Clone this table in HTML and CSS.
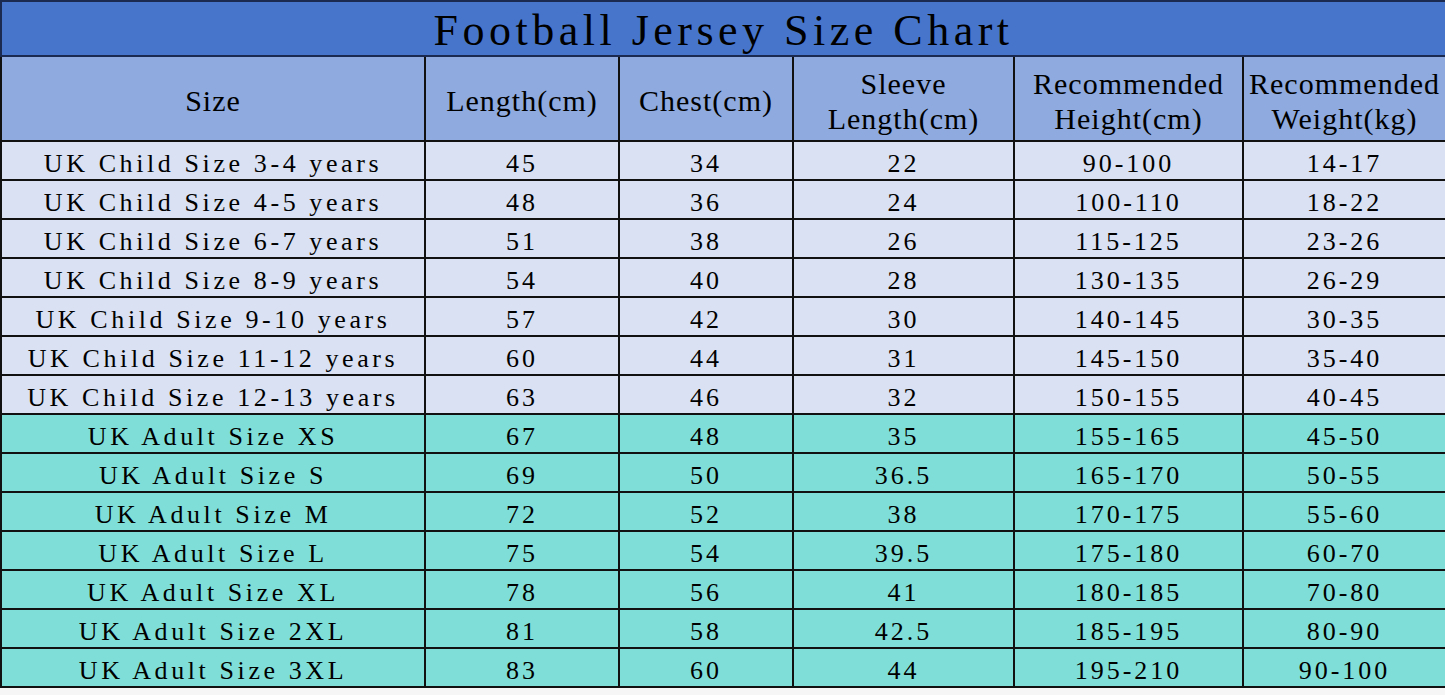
FILE: index.html
```html
<!DOCTYPE html>
<html>
<head>
<meta charset="utf-8">
<link rel="stylesheet" href="styles.css">
</head>
<body>
<table class="chart">
  <colgroup>
    <col class="c1"><col class="c2"><col class="c3"><col class="c4"><col class="c5"><col class="c6">
  </colgroup>
  <tr class="title"><td colspan="6">Football Jersey Size Chart</td></tr>
  <tr class="head">
    <td>Size</td>
    <td>Length(cm)</td>
    <td>Chest(cm)</td>
    <td>Sleeve<br>Length(cm)</td>
    <td>Recommended<br>Height(cm)</td>
    <td>Recommended<br>Weight(kg)</td>
  </tr>
  <tr class="child"><td class="name">UK Child Size 3-4 years</td><td>45</td><td>34</td><td>22</td><td>90-100</td><td>14-17</td></tr>
  <tr class="child"><td class="name">UK Child Size 4-5 years</td><td>48</td><td>36</td><td>24</td><td>100-110</td><td>18-22</td></tr>
  <tr class="child"><td class="name">UK Child Size 6-7 years</td><td>51</td><td>38</td><td>26</td><td>115-125</td><td>23-26</td></tr>
  <tr class="child"><td class="name">UK Child Size 8-9 years</td><td>54</td><td>40</td><td>28</td><td>130-135</td><td>26-29</td></tr>
  <tr class="child"><td class="name">UK Child Size 9-10 years</td><td>57</td><td>42</td><td>30</td><td>140-145</td><td>30-35</td></tr>
  <tr class="child"><td class="name">UK Child Size 11-12 years</td><td>60</td><td>44</td><td>31</td><td>145-150</td><td>35-40</td></tr>
  <tr class="child"><td class="name">UK Child Size 12-13 years</td><td>63</td><td>46</td><td>32</td><td>150-155</td><td>40-45</td></tr>
  <tr class="adult"><td class="name">UK Adult Size XS</td><td>67</td><td>48</td><td>35</td><td>155-165</td><td>45-50</td></tr>
  <tr class="adult"><td class="name">UK Adult Size S</td><td>69</td><td>50</td><td>36.5</td><td>165-170</td><td>50-55</td></tr>
  <tr class="adult"><td class="name">UK Adult Size M</td><td>72</td><td>52</td><td>38</td><td>170-175</td><td>55-60</td></tr>
  <tr class="adult"><td class="name">UK Adult Size L</td><td>75</td><td>54</td><td>39.5</td><td>175-180</td><td>60-70</td></tr>
  <tr class="adult"><td class="name">UK Adult Size XL</td><td>78</td><td>56</td><td>41</td><td>180-185</td><td>70-80</td></tr>
  <tr class="adult"><td class="name">UK Adult Size 2XL</td><td>81</td><td>58</td><td>42.5</td><td>185-195</td><td>80-90</td></tr>
  <tr class="adult"><td class="name">UK Adult Size 3XL</td><td>83</td><td>60</td><td>44</td><td>195-210</td><td>90-100</td></tr>
</table>
</body>
</html>
```

FILE: styles.css
```css
html, body {
  margin: 0;
  padding: 0;
  background: #f6f6f6;
}
body {
  font-family: "Liberation Serif", "DejaVu Serif", serif;
  color: #000;
}
.chart {
  width: 1445px;
  table-layout: fixed;
  border-collapse: collapse;
  border: 2px solid #111;
}
.c1 { width: 424px; }
.c2 { width: 194px; }
.c3 { width: 174px; }
.c4 { width: 221px; }
.c5 { width: 229px; }
.c6 { width: 203px; }
.chart td {
  border: 2px solid #111;
  padding: 0;
  text-align: center;
  white-space: nowrap;
  overflow: hidden;
}
.title td {
  height: 53px;
  background: #4775cc;
  font-size: 44px;
  letter-spacing: 4.5px;
  line-height: 48px;
  vertical-align: bottom;
  border-color: #1a2a50;
}
.head td {
  height: 79px;
  background: #8eaadf;
  font-size: 30px;
  letter-spacing: 1px;
  line-height: 35px;
  vertical-align: middle;
  padding-top: 4px;
}
.child td, .adult td {
  height: 37px;
  font-size: 26px;
  letter-spacing: 3px;
  line-height: 30px;
  vertical-align: bottom;
}
.child td.name, .adult td.name {
  letter-spacing: 3.6px;
}
.child td { background: #d9e1f3; }
.adult td { background: #7fdfd8; }
```
